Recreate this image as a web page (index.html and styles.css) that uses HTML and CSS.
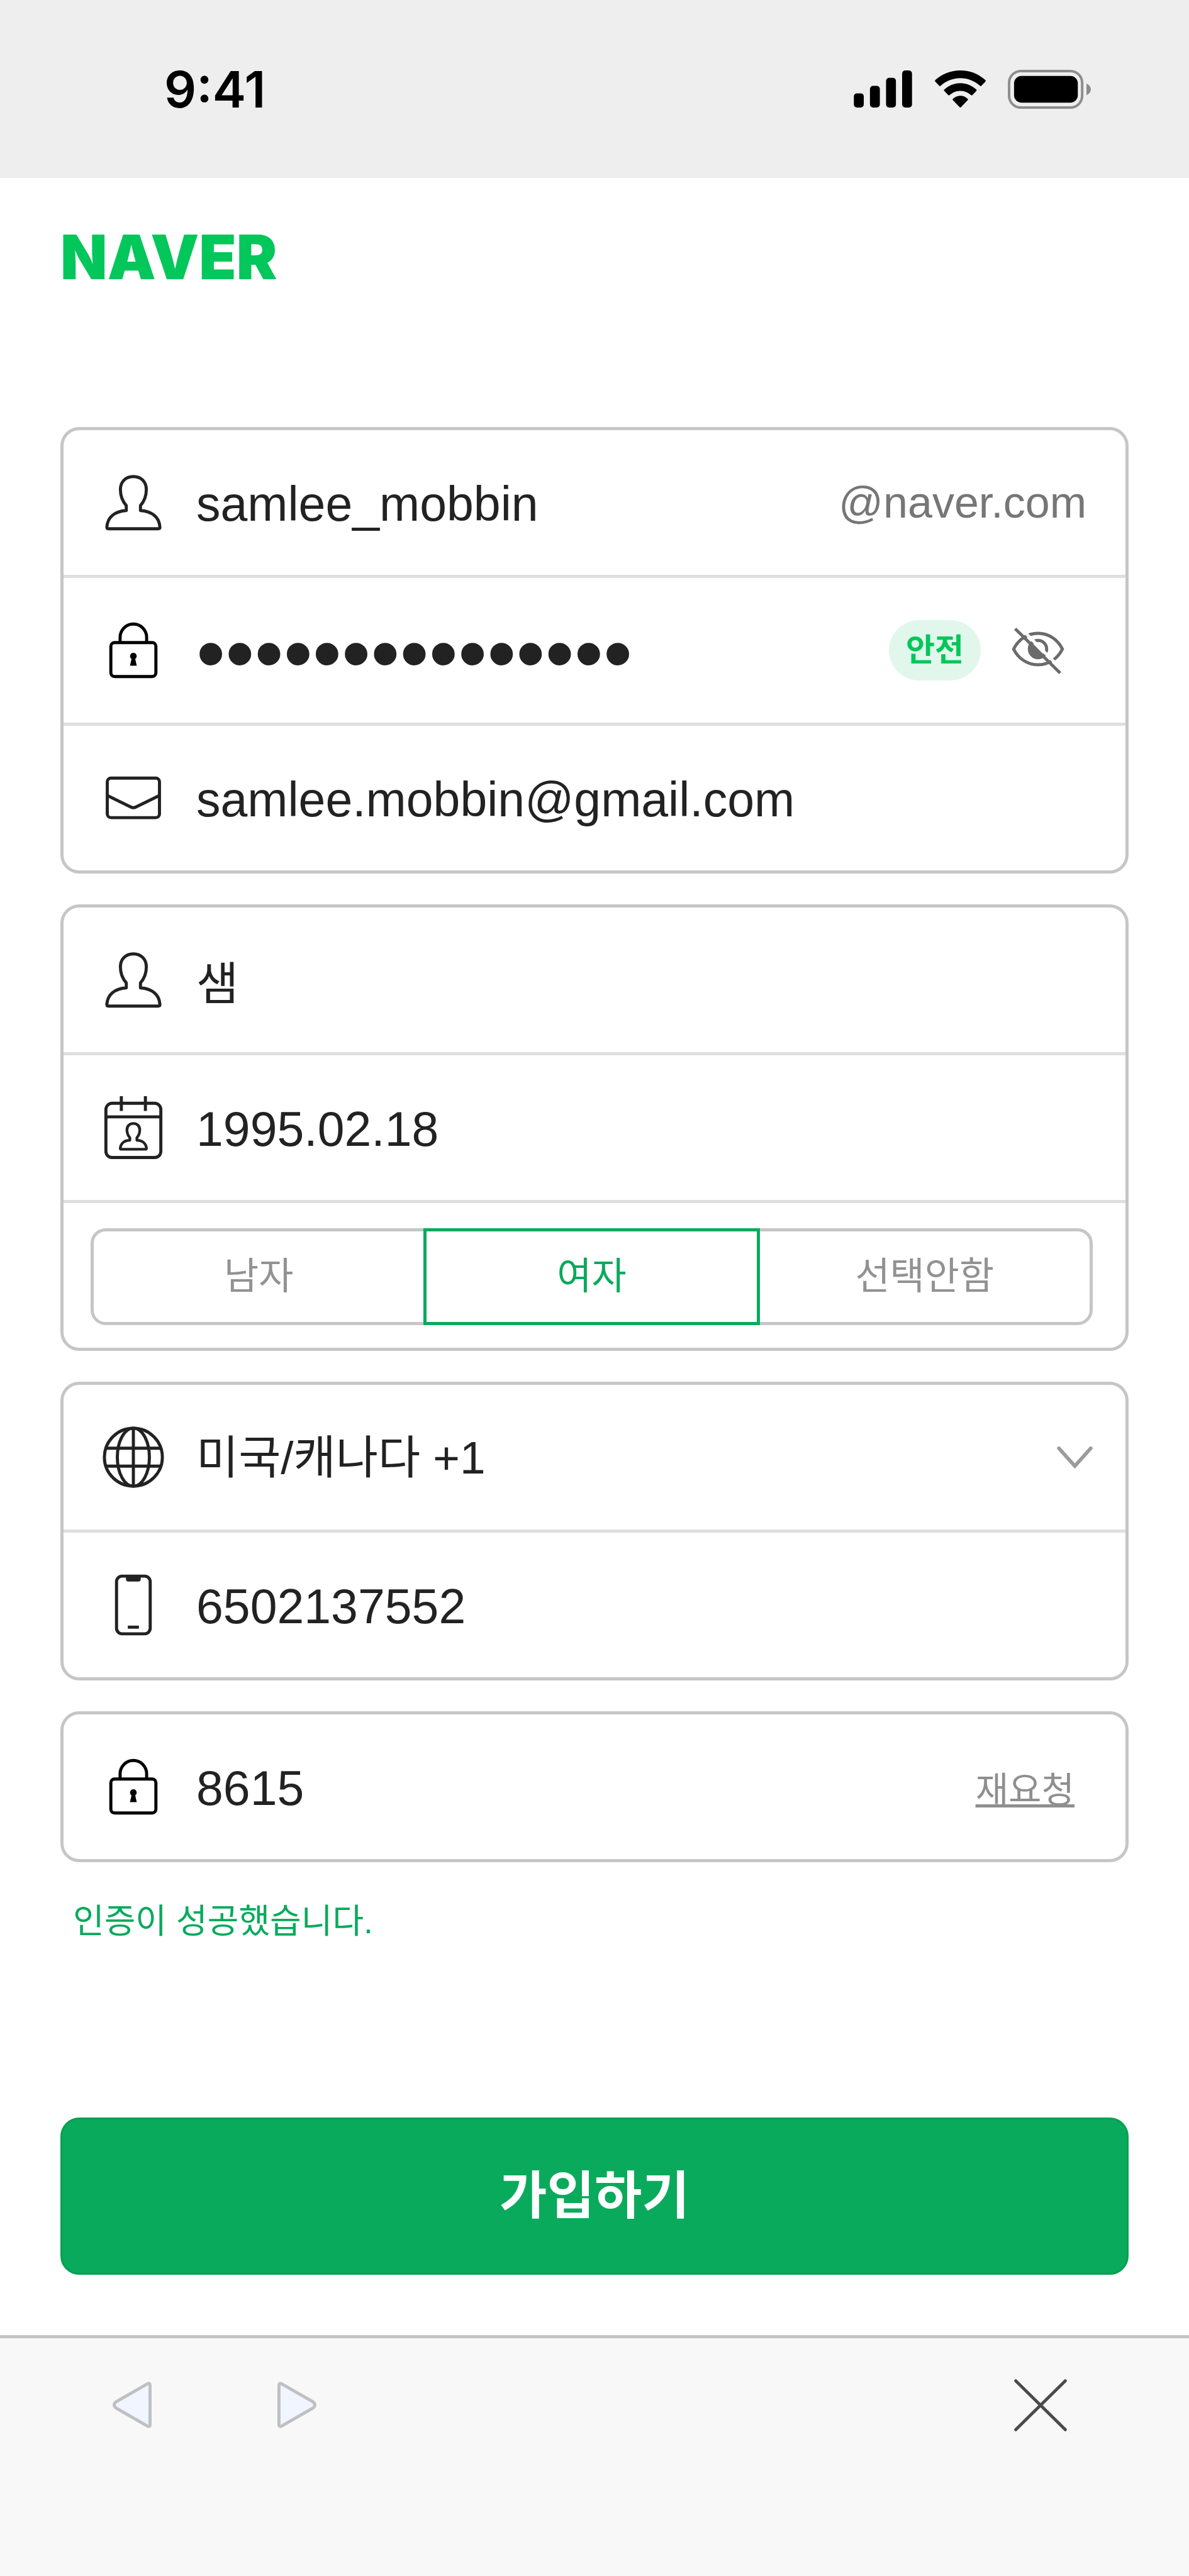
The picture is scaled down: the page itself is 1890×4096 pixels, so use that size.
FILE: index.html
```html
<!DOCTYPE html>
<html lang="ko">
<head>
    <meta charset="UTF-8">
    <meta name="viewport" content="width=device-width, initial-scale=1.0">
    <title>NAVER 회원가입</title>
    <link rel="stylesheet" href="styles.css">
</head>
<body>
    <svg class="symbols" aria-hidden="true">
        <symbol id="person" viewBox="0 0 104 104">
            <path d="M40.5 65V57C34.5 50 31 43 31 31C31 18 40 10 52 10C64 10 73 18 73 31C73 43 69.5 50 63.5 57V65C82 66 94 76 95 92q0 2.5-2.5 2.5H11.5q-2.5 0-2.5-2.5C10 76 22 66 40.5 65Z"/>
        </symbol>
        <symbol id="lock" viewBox="0 0 104 104">
            <rect x="15.5" y="39.5" width="73" height="55" rx="6"/>
            <path d="M30.5 39V31a21.5 21.5 0 0 1 43 0V39"/>
            <path class="solid" d="M52 56a5.500 5.500 0 0 1 3 10L57.500 77H46.500L49 66A5.500 5.500 0 0 1 52 56Z"/>
        </symbol>
    </svg>

    <div class="status">
        <div class="time">9:41</div>
        <div class="signals">
            <svg width="94" height="59" viewBox="0 0 95 60">
                <rect x="0" y="37" width="16" height="23" rx="5"/>
                <rect x="26" y="25" width="16" height="35" rx="5"/>
                <rect x="52" y="12" width="16" height="48" rx="5"/>
                <rect x="78" y="0" width="16" height="60" rx="5"/>
            </svg>
            <svg width="81" height="59" viewBox="0 0 82 60">
                <path d="M41 0C57 0 71 6 81.500 15.500Q82.500 17 81.500 18L75 25Q74 26 73 25C64 17 53 12.500 41 12.500S18 17 9 25Q8 26 7 25L.5 18Q-.5 17 .5 15.500C11 6 25 0 41 0Z"/>
                <path d="M41 20.500C51 20.500 60 24.500 67 31Q68 32 67 33L60.500 40Q59.500 41 58.500 40C54 36 48 33 41 33S28 36 23.500 40Q22.500 41 21.500 40L15 33Q14 32 15 31C22 24.500 31 20.500 41 20.500Z"/>
                <path d="M41 41C45.500 41 50 43 53 46Q54 47 53 48L42 59.500Q41 60.500 40 59.500L29 48Q28 47 29 46C32 43 36.500 41 41 41Z"/>
            </svg>
            <svg width="132" height="62" viewBox="0 0 134 63">
                <rect x="2" y="2" width="118" height="59" rx="19" fill="none" stroke="#8c8c8c" stroke-width="4"/>
                <rect x="10" y="10" width="103" height="43" rx="12"/>
                <path fill="#8c8c8c" d="M127 22C131 24 134 27 134 31.500S131 39 127 41Z"/>
            </svg>
        </div>
    </div>

    <div class="page">
        <h1 class="logo">NAVER</h1>

        <form class="join">
            <div class="card">
                <div class="row">
                    <label class="icon" for="userid" aria-label="아이디"><svg><use href="#person"/></svg></label>
                    <input type="text" id="userid" value="samlee_mobbin">
                    <span class="domain">@naver.com</span>
                </div>
                <div class="row">
                    <label class="icon black" for="password" aria-label="비밀번호"><svg><use href="#lock"/></svg></label>
                    <input type="password" id="password" value="mobbin123456789">
                    <span class="badge">안전</span>
                    <button type="button" class="eye" aria-label="비밀번호 보기">
                        <svg viewBox="0 0 104 104">
                            <path d="M12.500 50C20 35 34 24.500 52 24.500S84 35 91.500 50C84 65 70 75.500 52 75.500S20 65 12.500 50Z"/>
                            <circle cx="52" cy="50" r="14"/>
                            <path class="cut" d="M18 10L94 87"/>
                            <path class="half" d="M41 38.500A16 16 0 0 0 63.500 61.500Z"/>
                            <path d="M15 17L88 89"/>
                        </svg>
                    </button>
                </div>
                <div class="row">
                    <label class="icon" for="email" aria-label="이메일">
                        <svg viewBox="0 0 104 104">
                            <rect x="9.700" y="19.700" width="84.600" height="64" rx="6"/>
                            <path d="M10 48L48 66.500q4 2 8 0L94 48"/>
                        </svg>
                    </label>
                    <input type="email" id="email" value="samlee.mobbin@gmail.com">
                </div>
            </div>

            <div class="card">
                <div class="row">
                    <label class="icon" for="name" aria-label="이름"><svg><use href="#person"/></svg></label>
                    <input type="text" class="korean" id="name" value="샘">
                </div>
                <div class="row">
                    <label class="icon" for="birth" aria-label="생년월일">
                        <svg viewBox="0 0 104 104">
                            <rect x="7.500" y="12.500" width="89" height="88" rx="10"/>
                            <path d="M32.500 1V25M71.500 1V25M8 34.500H96"/>
                            <path class="mini" transform="translate(26.300 40.300) scale(.494)" d="M40.500 65V57C34.500 50 31 43 31 31C31 18 40 10 52 10C64 10 73 18 73 31C73 43 69.500 50 63.500 57V65C82 66 94 76 95 92q0 2.500-2.500 2.500H11.500q-2.500 0-2.500-2.500C10 76 22 66 40.500 65Z"/>
                        </svg>
                    </label>
                    <input type="text" id="birth" value="1995.02.18">
                </div>
                <div class="row gender">
                    <label class="choice"><input type="radio" name="gender" value="M">남자</label>
                    <label class="choice"><input type="radio" name="gender" value="F" checked>여자</label>
                    <label class="choice"><input type="radio" name="gender" value="U">선택안함</label>
                </div>
            </div>

            <div class="card">
                <div class="row">
                    <label class="icon" for="country" aria-label="국가">
                        <svg viewBox="0 0 104 104">
                            <circle cx="52" cy="52" r="47"/>
                            <ellipse cx="52" cy="52" rx="26" ry="47"/>
                            <path d="M52 5V99M7.500 37.500H96.500M7.500 66.500H96.500"/>
                        </svg>
                    </label>
                    <select class="korean" id="country">
                        <option>미국/캐나다 +1</option>
                        <option>대한민국 +82</option>
                    </select>
                    <svg class="arrow" viewBox="0 0 58 36"><path d="M3 3L29 32L55 3"/></svg>
                </div>
                <div class="row">
                    <label class="icon" for="phone" aria-label="휴대전화번호">
                        <svg viewBox="0 0 104 104">
                            <rect x="24.700" y="5.200" width="54.600" height="93.600" rx="9"/>
                            <path class="solid" d="M40 4H64V10Q64 14 60 14H44Q40 14 40 10Z"/>
                            <path d="M43 88H61"/>
                        </svg>
                    </label>
                    <input type="tel" id="phone" value="6502137552">
                </div>
            </div>

            <div class="card">
                <div class="row">
                    <label class="icon black" for="code" aria-label="인증번호"><svg><use href="#lock"/></svg></label>
                    <input type="text" id="code" value="8615">
                    <a class="resend" href="#">재요청</a>
                </div>
            </div>

            <p class="message">인증이 성공했습니다.</p>
            <button type="submit" class="submit">가입하기</button>
        </form>
    </div>

    <div class="toolbar">
        <button type="button" aria-label="뒤로">
            <svg class="tri" viewBox="0 0 122 122"><path d="M84.500 27.500Q90 24 90 30V92Q90 98 84.500 94.500L35 66Q29 61 35 56Z"/></svg>
        </button>
        <button type="button" aria-label="앞으로">
            <svg class="tri" viewBox="0 0 122 122"><path d="M37.500 27.500Q32 24 32 30V92Q32 98 37.500 94.500L87 66Q93 61 87 56Z"/></svg>
        </button>
        <button type="button" class="close" aria-label="닫기">
            <svg viewBox="0 0 122 122"><path d="M21 22L101 101M101 22L21 101"/></svg>
        </button>
    </div>
</body>
</html>
```

FILE: styles.css
```css
* {
    box-sizing: border-box;
}
body {
    display: flex;
    flex-direction: column;
    min-height: 100vh;
    margin: 0;
    font-family: "Liberation Sans", "Noto Sans CJK KR", sans-serif;
    color: #222;
    background-color: #fff;
}
input, select, button {
    margin: 0;
    padding: 0;
    border: none;
    outline: none;
    background: none;
    font-family: inherit;
    color: inherit;
}
button {
    cursor: pointer;
}
svg {
    display: block;
}
.symbols {
    position: absolute;
    width: 0;
    height: 0;
}

/* status bar */
.status {
    display: flex;
    justify-content: space-between;
    align-items: center;
    height: 283px;
    padding: 0 156px 0 261px;
    background-color: #eee;
    color: #000;
}
.time {
    font-family: Inter, sans-serif;
    font-size: 80px;
    font-weight: 600;
    line-height: 96px;
}
.signals {
    display: flex;
    align-items: center;
    gap: 35px;
}

/* form */
.page {
    padding: 78px 96px 96px;
}
.logo {
    margin: 0 0 222px;
    font-family: Inter, sans-serif;
    font-size: 97px;
    font-weight: 900;
    line-height: 96px;
    color: #03c75a;
}
.join {
    display: flex;
    flex-direction: column;
}
.card {
    margin-bottom: 49px;
    border: 5px solid #c6c6c6;
    border-radius: 30px;
}
.row {
    display: flex;
    align-items: center;
    height: 230px;
    padding: 0 52px 0 60px;
}
.row + .row {
    height: 235px;
    border-top: 5px solid #dfdfdf;
}
.row input, .row select {
    flex: 1;
    min-width: 0;
    height: 120px;
    padding-top: 4px;
    font-size: 77px;
}
.row .korean {
    padding-top: 0;
    font-size: 73px;
}
.row input[type="password"] {
    padding-top: 8px;
    font-size: 132px;
}
.icon {
    width: 102px;
    margin-right: 49px;
    color: #222;
}
.black {
    color: #000;
}
.icon svg {
    width: 102px;
    height: 102px;
    fill: none;
    stroke: currentColor;
    stroke-width: 5px;
    stroke-linejoin: round;
}
.icon .mini {
    stroke-width: 9px;
}
.solid {
    fill: currentColor;
    stroke: none;
}
.domain {
    margin-right: 10px;
    font-size: 70px;
    color: #767676;
}
.badge {
    margin-right: 35px;
    padding: 0 27px;
    border-radius: 48px;
    background-color: #e1f7eb;
    font-size: 50px;
    font-weight: 700;
    line-height: 96px;
    color: #03c75a;
}
.eye {
    display: flex;
    justify-content: center;
    width: 112px;
    margin-right: 31px;
}
.eye svg {
    width: 102px;
    height: 102px;
    fill: none;
    stroke: #6b6b6b;
    stroke-width: 5px;
}
.eye .cut {
    stroke: #fff;
    stroke-width: 5px;
}
.eye .half {
    fill: #6b6b6b;
    stroke: none;
}
.row.gender {
    padding: 3px 52px 0 43px;
}
.choice {
    position: relative;
    flex: 1;
    height: 154px;
    border: 5px solid #c6c6c6;
    font-size: 60px;
    line-height: 144px;
    text-align: center;
    color: #929294;
}
.choice + .choice {
    margin-left: -5px;
}
.choice:first-child {
    border-radius: 24px 0 0 24px;
}
.choice:last-child {
    border-radius: 0 24px 24px 0;
}
.choice input {
    position: absolute;
    top: 0;
    left: 0;
    width: 100%;
    height: 100%;
    appearance: none;
    cursor: pointer;
}
.choice:has(input:checked) {
    z-index: 1;
    border-color: #09aa5c;
    color: #09aa5c;
}
select {
    appearance: none;
}
.arrow {
    width: 57px;
    height: 35px;
    fill: none;
    stroke: #9b9b9b;
    stroke-width: 6px;
    stroke-linecap: round;
}
.resend {
    margin-right: 29px;
    font-size: 57px;
    color: #8f8f8f;
    text-decoration-thickness: 5px;
    text-decoration-skip-ink: none;
}
.message {
    margin: 5px 0 272px;
    padding-left: 20px;
    font-size: 54px;
    line-height: 80px;
    color: #09aa5c;
}
.submit {
    height: 250px;
    padding-bottom: 16px;
    border: 3px solid #04a052;
    border-radius: 30px;
    background-color: #0aaa5c;
    font-size: 82px;
    font-weight: 700;
    color: #fff;
}

/* browser toolbar */
.toolbar {
    display: flex;
    flex: 1;
    align-items: flex-start;
    gap: 142px;
    padding: 46px 176px 0 150px;
    border-top: 5px solid #c4c4c4;
    background-color: #f8f8f8;
}
.toolbar svg {
    width: 120px;
    height: 120px;
    fill: none;
    stroke: #4a4a4a;
    stroke-width: 5px;
    stroke-linecap: round;
}
.toolbar .tri {
    fill: #f0f5ff;
    stroke: #bfc0c2;
}
.close {
    margin-left: auto;
}
```
